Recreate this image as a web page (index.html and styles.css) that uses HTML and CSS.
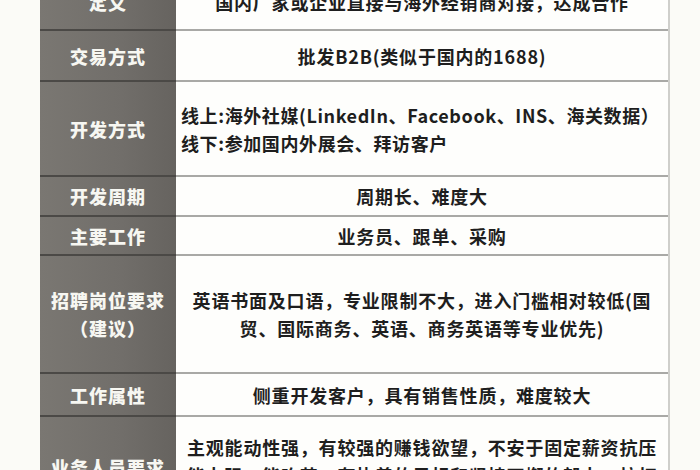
FILE: index.html
```html
<!DOCTYPE html>
<html lang="zh-CN">
<head>
<meta charset="utf-8">
<link rel="stylesheet" href="styles.css">
</head>
<body>
<div class="page">
  <div class="table">
    <div class="row r1"><div class="th">定义</div><div class="td">国内厂家或企业直接与海外经销商对接，达成合作</div></div>
    <div class="row r2"><div class="th">交易方式</div><div class="td">批发B2B(类似于国内的1688)</div></div>
    <div class="row r3"><div class="th">开发方式</div><div class="td left">线上:海外社媒(LinkedIn、Facebook、INS、海关数据）<br>线下:参加国内外展会、拜访客户</div></div>
    <div class="row r4"><div class="th">开发周期</div><div class="td">周期长、难度大</div></div>
    <div class="row r5"><div class="th">主要工作</div><div class="td">业务员、跟单、采购</div></div>
    <div class="row r6"><div class="th">招聘岗位要求<br>（建议）</div><div class="td">英语书面及口语，专业限制不大，进入门槛相对较低(国贸、国际商务、英语、商务英语等专业优先)</div></div>
    <div class="row r7"><div class="th">工作属性</div><div class="td">侧重开发客户，具有销售性质，难度较大</div></div>
    <div class="row r8"><div class="th">业务人员要求</div><div class="td">主观能动性强，有较强的赚钱欲望，不安于固定薪资抗压能力强、能吃苦，有执着的目标和坚持不懈的毅力，抗打击</div></div>
  </div>
</div>
</body>
</html>
```
FILE: styles.css
```css
html, body {
  margin: 0;
  padding: 0;
  background: #fbfbf7;
  overflow: hidden;
}
.page {
  width: 700px;
  height: 470px;
  overflow: hidden;
}
.table {
  margin-top: -25px;
  margin-left: 40px;
  width: 628px;
  border-right: 2px solid #cfcfcb;
  background: #fefefc;
  font-family: "Noto Sans CJK SC", "Noto Sans", sans-serif;
}
.row {
  display: grid;
  grid-template-columns: 136px 1fr;
}
.th {
  display: flex;
  align-items: center;
  justify-content: center;
  text-align: center;
  color: #f7f7f2;
  font-size: 18px;
  font-weight: 900;
  letter-spacing: 1px;
  line-height: 28px;
  background: linear-gradient(90deg, #7a7772 0%, #716e6a 60%, #66635f 100%);
  border-bottom: 2px solid #4b4946;
}
.td {
  display: flex;
  align-items: center;
  justify-content: center;
  text-align: center;
  color: #1e1e1e;
  font-size: 18px;
  font-weight: 700;
  letter-spacing: 0.8px;
  line-height: 28px;
  padding: 0 8px;
  border-bottom: 2px solid #a9a9a6;
}
.td.left {
  justify-content: flex-start;
  text-align: left;
  padding-left: 5px;
  white-space: nowrap;
  letter-spacing: 0.6px;
}
.r1 { height: 56px; }
.r2 { height: 51px; }
.r3 { height: 95px; }
.r4 { height: 40px; }
.r5 { height: 39px; }
.r6 { height: 118px; }
.r7 { height: 43px; }
.r8 { height: 112px; }
.r8 .td { align-items: flex-start; padding-top: 16px; }
.r8 .th { align-items: flex-start; padding-top: 36px; }
```
